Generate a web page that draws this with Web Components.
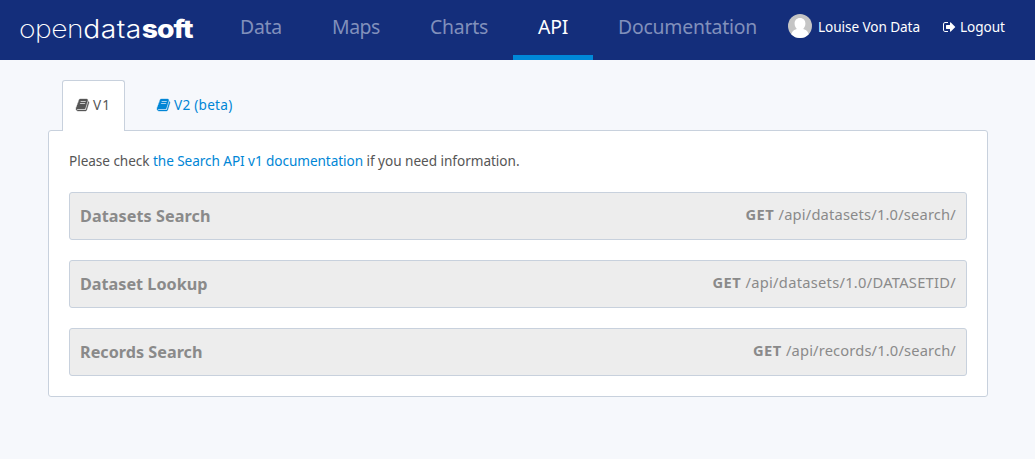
<!DOCTYPE html>
<html lang="en">
<head>
<meta charset="utf-8">
<title>API</title>
<style>
body{margin:0;background:#f6f8fc;color:#565656;font:13.6px/20px "Noto Sans","Open Sans",sans-serif}
</style>
</head>
<body>
<ods-header>
  <ods-nav-item width="42">Data</ods-nav-item>
  <ods-nav-item width="48">Maps</ods-nav-item>
  <ods-nav-item width="58">Charts</ods-nav-item>
  <ods-nav-item width="30" active>API</ods-nav-item>
  <ods-nav-item width="139">Documentation</ods-nav-item>
</ods-header>
<ods-api-page></ods-api-page>
<script>
const define = (name, html, ready) => customElements.define(name, class extends HTMLElement {
  connectedCallback() {
    if (this.shadowRoot) return;
    this.attachShadow({ mode: 'open' }).innerHTML = html;
    if (ready) ready(this, this.shadowRoot);
  }
});

// A run of text spaced out or tightened to fill the given width.
define('ods-text', `<style>
  :host{display:inline-block;white-space:pre}
  span{display:inline-block}
</style><span><slot></slot></span>`, (el, root) => {
  const w = parseFloat(el.getAttribute('width'));
  const span = root.querySelector('span');
  const natural = parseFloat(getComputedStyle(span).width);
  span.style.letterSpacing = (w - natural) / el.textContent.length + 'px';
  el.style.width = w + 'px';
});

define('ods-icon', `<style>
  :host{display:block;flex:none}
  svg{display:block;height:14px;fill:currentColor}
  :host([name=book]) svg{stroke:currentColor;stroke-width:45;overflow:visible}
</style><svg></svg>`, (el, root) => {
  const icons = {
    book: ['0 0 1664 1792', '<path d="M1639 478q40 57 18 129l-275 906q-19 64-76.500 107.500t-122.500 43.500h-923q-77 0-148.500-53.500t-99.500-131.500q-24-67-2-127 0-4 3-27t4-37q1-8-3-21.500t-3-19.500q2-11 8-21t16.500-23.500 16.500-23.500q23-38 45-91.500t30-91.500q3-10 .5-30t-.5-28q3-11 17-28t17-23q21-36 42-92t25-90q1-9-2.500-32t.5-28q4-13 22-30.500t22-22.500q19-26 42.500-84.500t27.500-96.500q1-8-3-25.500t-2-26.500q2-8 9-18t18-23 17-21q8-12 16.500-30.500t15-35 16-36 19.500-32 26.500-23.500 36-11.500 47.500 5.500l-1 3q38-9 51-9h761q74 0 114 56t18 130l-274 906q-36 119-71.500 153.500t-128.500 34.500h-869q-27 0-38 15-11 16-1 43 24 70 144 70h923q29 0 56-15.500t35-41.500l300-987q7-22 5-57 38 15 59 43zm-1064 2q-4 13 2 22.500t20 9.500h608q13 0 25.500-9.500t16.500-22.500l21-64q4-13-2-22.500t-20-9.500h-608q-13 0-25.500 9.500t-16.500 22.500zm-83 256q-4 13 2 22.500t20 9.500h608q13 0 25.500-9.500t16.500-22.500l21-64q4-13-2-22.500t-20-9.500h-608q-13 0-25.500 9.500t-16.500 22.500z"/>'],
    logout: ['64 0 1664 1792', '<path d="M704 1440q0 4 1 20t.5 26.500-3 23.500-10 19.500-20.500 6.500h-320q-119 0-203.500-84.500t-84.500-203.500v-704q0-119 84.500-203.500t203.500-84.500h320q13 0 22.500 9.500t9.500 22.500q0 4 1 20t.5 26.500-3 23.500-10 19.500-20.500 6.500h-320q-66 0-113 47t-47 113v704q0 66 47 113t113 47h312l11.500 1 11.500 3 8 5.500 7 9 2 13.500zm928-544q0 26-19 45l-544 544q-19 19-45 19t-45-19-19-45v-288h-448q-26 0-45-19t-19-45v-384q0-26 19-45t45-19h448v-288q0-26 19-45t45-19 45 19l544 544q19 19 19 45z"/>']
  };
  const [box, shape] = icons[el.getAttribute('name')];
  const svg = root.querySelector('svg');
  svg.setAttribute('viewBox', box);
  svg.setAttribute('width', 13);
  svg.innerHTML = shape;
});

define('ods-logo', `<style>
  :host{display:block;width:196px;margin:0 0 0 -1px;color:#fff;font:200 25px/58px Inter,Lato,sans-serif}
  div{display:flex;width:156px;transform:scaleX(1.13);transform-origin:0 0}
  .d{font-weight:350}
  .s{font-weight:800}
</style><div><ods-text width="56.800">open</ods-text><ods-text class="d" width="51.800">data</ods-text><ods-text class="s" width="45">soft</ods-text></div>`);

define('ods-nav-item', `<style>
  :host{display:block;box-sizing:border-box;height:60px;padding:0 25px;font-size:19.4px;line-height:54px;color:#8190bb}
  :host([active]){color:#fff;border-bottom:5px solid #0088d8}
</style><ods-text></ods-text>`, (el, root) => {
  const old = root.querySelector('ods-text');
  const text = document.createElement('ods-text');
  text.setAttribute('width', el.getAttribute('width'));
  text.textContent = el.textContent;
  old.replaceWith(text);
});

define('ods-avatar', `<style>:host{display:block;width:24px;height:24px;flex:none}svg{display:block}</style>
<svg width="24" height="24" viewBox="0 0 24 24"><defs><clipPath id="c"><circle cx="12" cy="12" r="12"/></clipPath></defs>
<g clip-path="url(#c)"><path fill="#c5c5c5" d="M0 0h24v24H0z"/><path fill="#fff" d="M12 4c3.400 0 5.400 2.300 5.400 5.600 0 2.300-.9 4.200-2.200 5.300 3.700.9 5.900 3.400 6.200 9.100H2.600c.3-5.700 2.500-8.200 6.200-9.100-1.300-1.100-2.200-3-2.200-5.300C6.600 6.300 8.600 4 12 4z"/></g></svg>`);

define('ods-header', `<style>
  :host{display:flex;box-sizing:border-box;height:60px;padding-left:20px;background:#142e7b;color:#fff}
  nav{display:flex}
  .user{display:flex;align-items:center;height:52px;margin-left:6px;line-height:20px}
  .name{margin:2px 23px 0 6px}
  .out{display:flex;align-items:center;gap:4px;padding-top:2px}
</style><ods-logo></ods-logo><nav><slot></slot></nav>
<div class="user"><ods-avatar></ods-avatar><ods-text class="name" width="102">Louise Von Data</ods-text>
<div class="out"><ods-icon name="logout"></ods-icon><ods-text width="45">Logout</ods-text></div></div>`);

define('ods-tab', `<style>
  :host{display:flex;align-items:center;gap:4px;box-sizing:border-box;height:51px;padding:0 13px 2px;border:1px solid transparent;border-bottom:0;color:#0086d6}
  :host([active]){background:#fff;border-color:#c8d1dd;border-radius:3px 3px 0 0;color:#565656}
</style><ods-icon name="book"></ods-icon><slot></slot>`);

define('ods-endpoint', `<style>
  :host{display:flex;justify-content:space-between;box-sizing:border-box;height:48px;padding:0 10px;border:1px solid #c8d1dd;border-radius:3px;background:#ededed;color:#8a8a8a;line-height:46px}
  .title{font-size:16.2px;font-weight:700}
  .call{margin-top:-2px;font-size:14.700px;display:flex}
</style><div class="title"><slot name="title"></slot></div><div class="call"><slot></slot></div>`);

define('ods-panel', `<style>
  :host{display:flex;flex-direction:column;gap:20px;box-sizing:border-box;height:267px;margin-top:-1px;padding:20px;border:1px solid #c8d1dd;border-radius:3px;background:#fff}
</style><slot></slot>`);

define('ods-api-page', `<style>
  :host{display:block;width:940px;margin-left:48px;padding-top:20px}
  .tabs{display:flex;gap:18px;padding-left:14px;position:relative;z-index:1}
  p{display:flex;margin:0;height:21px}
  .link{color:#0086d6}
  b{display:block}
</style>
<div class="tabs"><ods-tab active><ods-text width="18">V1</ods-text></ods-tab><ods-tab><ods-text width="58.500">V2 (beta)</ods-text></ods-tab></div>
<ods-panel>
<p><ods-text width="84">Please check </ods-text><ods-text class="link" width="210">the Search API v1 documentation</ods-text><ods-text width="156.500"> if you need information.</ods-text></p>
<ods-endpoint><ods-text slot="title" width="130.500">Datasets Search</ods-text><b><ods-text width="33">GET </ods-text></b><ods-text width="177.500">/api/datasets/1.0/search/</ods-text></ods-endpoint>
<ods-endpoint><ods-text slot="title" width="127.500">Dataset Lookup</ods-text><b><ods-text width="33">GET </ods-text></b><ods-text width="210.500">/api/datasets/1.0/DATASETID/</ods-text></ods-endpoint>
<ods-endpoint><ods-text slot="title" width="122.500">Records Search</ods-text><b><ods-text width="33">GET </ods-text></b><ods-text width="170">/api/records/1.0/search/</ods-text></ods-endpoint>
</ods-panel>`);
</script>
</body>
</html>
